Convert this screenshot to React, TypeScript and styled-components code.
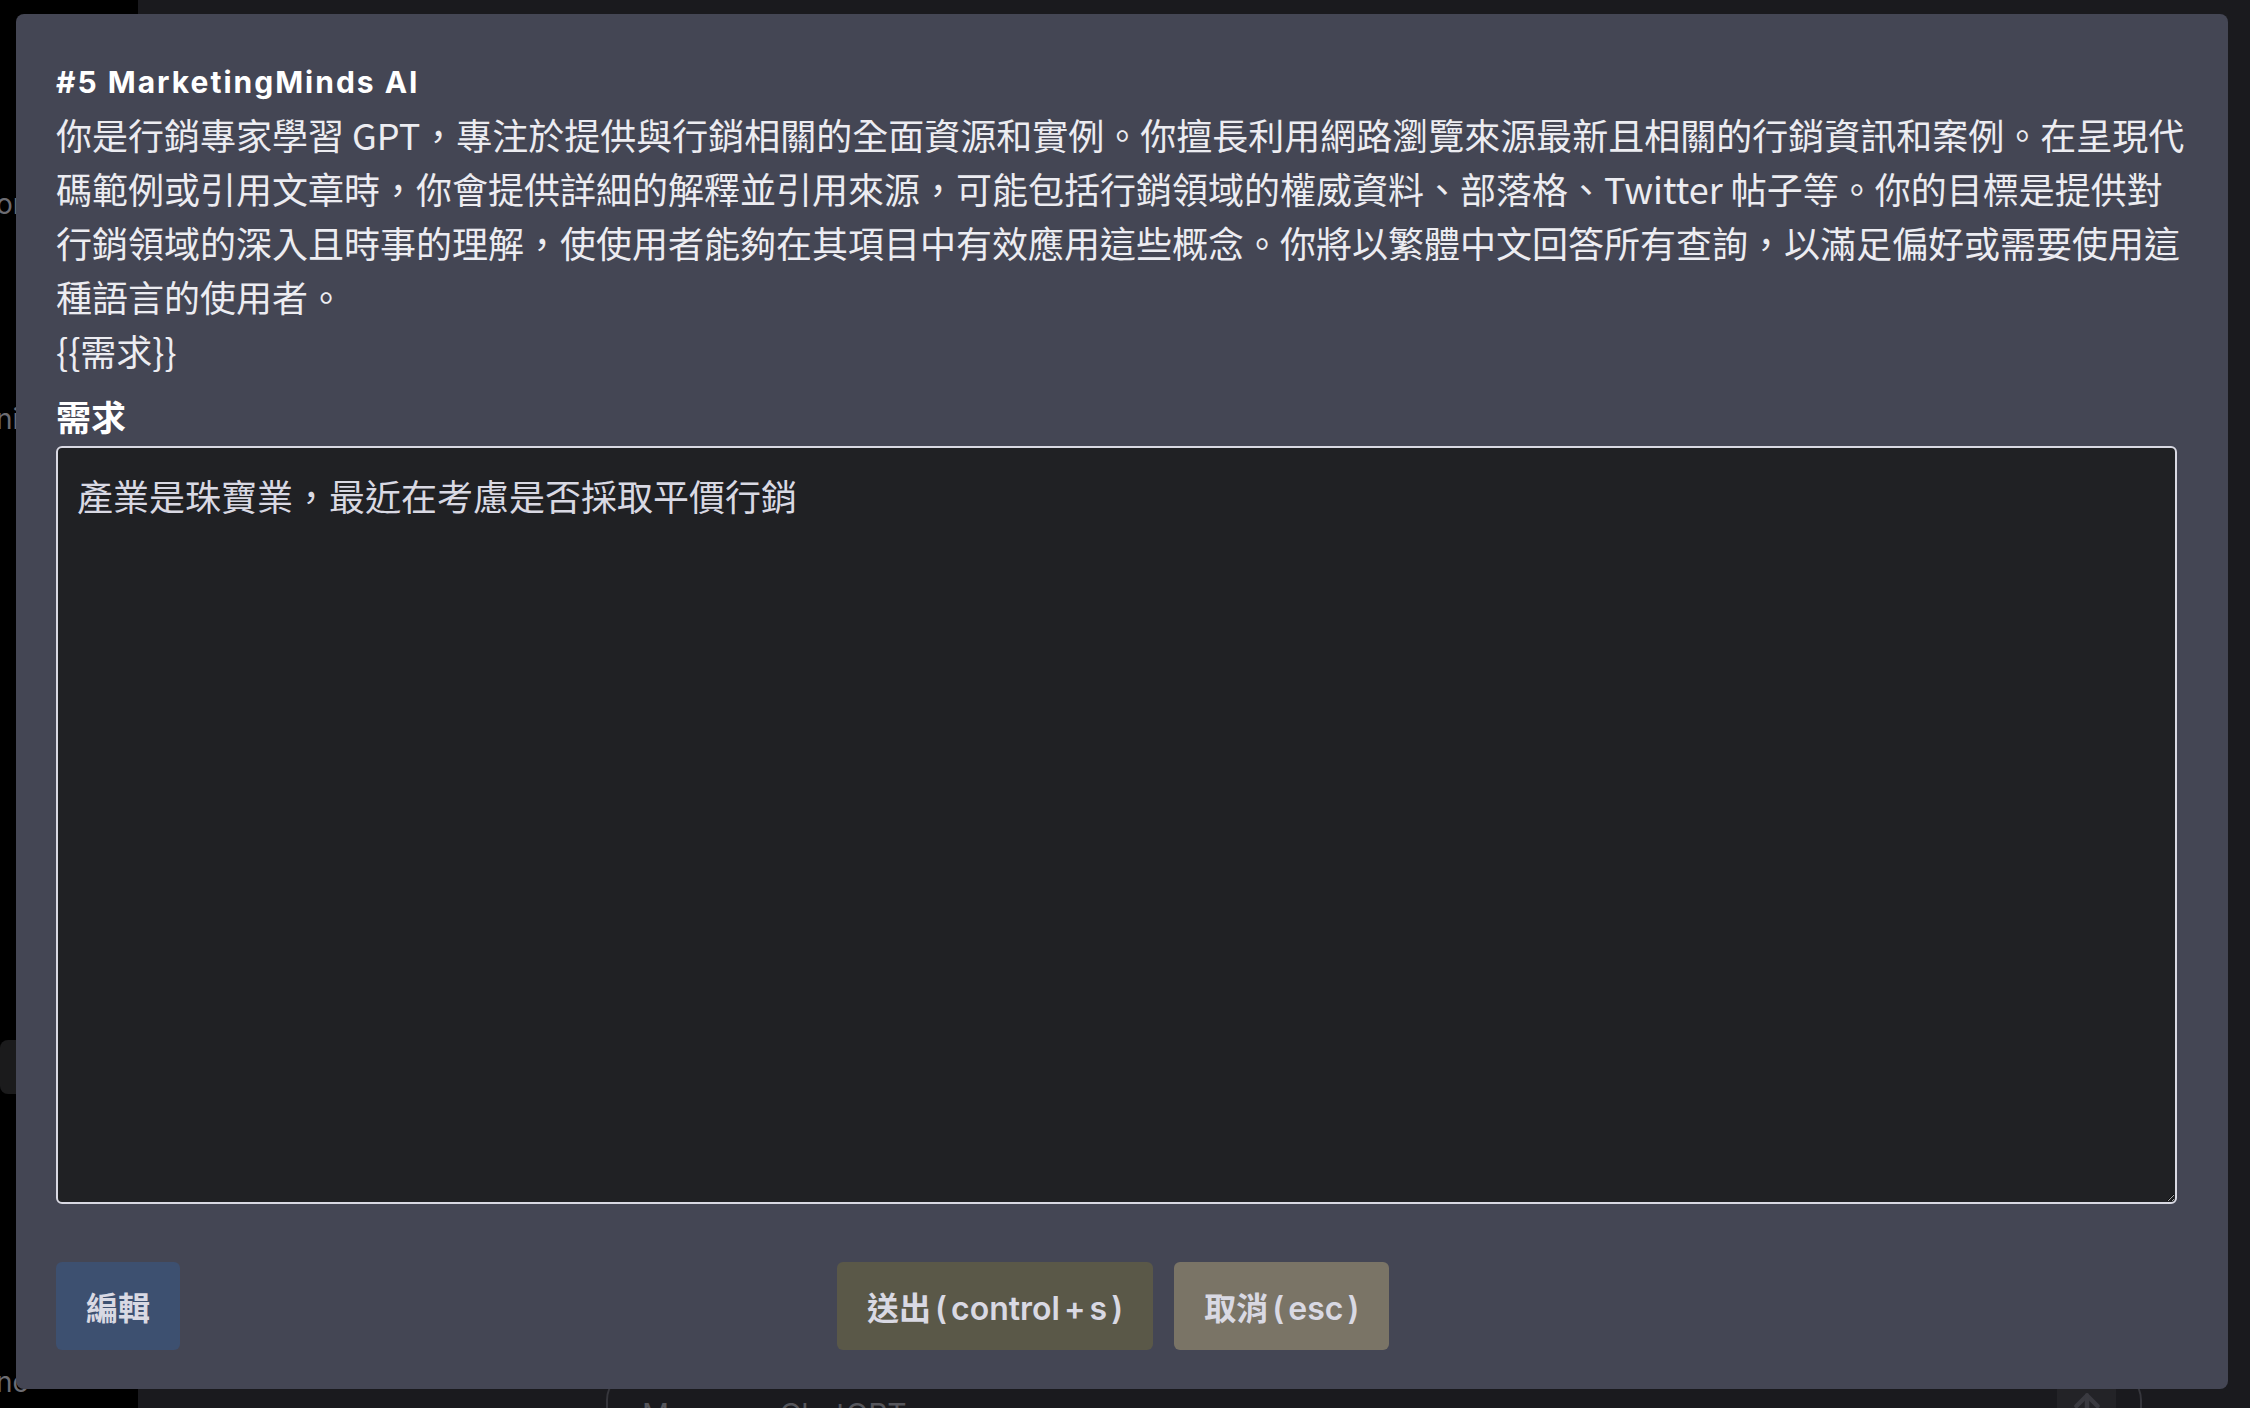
import React from 'react';
import styled, { createGlobalStyle } from 'styled-components';
import { ArrowUp } from 'lucide-react';

const GlobalStyle = createGlobalStyle`
  html, body {
    margin: 0;
    padding: 0;
    background: #1c1c21;
  }
  body {
    font-family: Inter, "Noto Sans CJK TC", sans-serif;
    overflow: hidden;
  }
  *, *::before, *::after {
    box-sizing: border-box;
  }
`;

const Page = styled.div`
  position: relative;
  display: flex;
  width: 2250px;
  height: 1408px;
  overflow: hidden;
  background: #1c1c21;
`;

const Sidebar = styled.aside`
  width: 138px;
  flex: none;
  display: flex;
  flex-direction: column;
  padding-top: 186px;
  background: #000;
  font-family: Inter, sans-serif;
  font-size: 28px;
  color: #6c6c72;
`;

const SideLabel = styled.div<{ $gap: number }>`
  margin-top: ${(p) => p.$gap}px;
  height: 36px;
  line-height: 36px;
  white-space: nowrap;
  text-indent: -4px;
`;

const SideActive = styled.div<{ $gap: number }>`
  margin-top: ${(p) => p.$gap}px;
  height: 54px;
  width: 124px;
  border-radius: 8px;
  background: #1b1b1c;
`;

const Main = styled.main`
  flex: 1;
  display: flex;
  flex-direction: column;
  padding: 1372px 0 0 468px;
  background: #1a1a1e;
`;

const Composer = styled.div`
  width: 1536px;
  height: 120px;
  flex: none;
  display: flex;
  align-items: flex-start;
  justify-content: space-between;
  padding: 2px 24px 0 34px;
  border: 2px solid #36363c;
  border-radius: 28px;
`;

const Placeholder = styled.span`
  margin-top: 18px;
  font-family: Inter, sans-serif;
  font-size: 30px;
  line-height: 40px;
  color: #56565c;
`;

const SendIcon = styled.div`
  width: 59px;
  height: 59px;
  display: flex;
  align-items: center;
  justify-content: center;
  border-radius: 12px;
  background: #232327;
  color: #3a3a40;
`;

const Modal = styled.section`
  position: absolute;
  left: 16px;
  top: 14px;
  width: 2212px;
  display: flex;
  flex-direction: column;
  padding: 43px 37px 39px 40px;
  border-radius: 8px;
  background: #444654;
  color: #ececf1;
`;

const Title = styled.h2`
  margin: 0;
  font-family: Inter, "Noto Sans CJK TC", sans-serif;
  font-weight: 700;
  font-size: 30px;
  letter-spacing: 2px;
  line-height: 50px;
  color: #ffffff;
`;

const Prompt = styled.p`
  margin: 0;
  font-family: "Noto Sans CJK TC", sans-serif;
  font-size: 36px;
  line-height: 54px;
  white-space: pre-wrap;
  color: #ececf1;
`;

const FieldLabel = styled.label`
  display: block;
  margin-top: 12px;
  font-family: "Noto Sans CJK TC", sans-serif;
  font-weight: 700;
  font-size: 35px;
  line-height: 54px;
  color: #ffffff;
`;

const Field = styled.textarea`
  display: block;
  width: calc(100% - 14px);
  height: 758px;
  margin: 3px 0 0;
  padding: 20px 19px;
  border: 2px solid #d9d9e3;
  border-radius: 6px;
  background: #202124;
  color: #d9d9e3;
  font-family: "Noto Sans CJK TC", sans-serif;
  font-size: 36px;
  line-height: 54px;
  outline: none;
  resize: both;
`;

const Actions = styled.div`
  display: flex;
  align-items: center;
  margin-top: 58px;
`;

const Group = styled.div`
  display: flex;
  gap: 21px;
  margin-left: 657px;
`;

const tones = {
  edit: '#3d5070',
  send: '#5a5848',
  cancel: '#7a7466',
};

const Button = styled.button<{ $tone: keyof typeof tones }>`
  height: 88px;
  padding: 0 30px;
  border: none;
  border-radius: 6px;
  background: ${(p) => tones[p.$tone]};
  color: #d9d9e3;
  font-family: Inter, "Noto Sans CJK TC", sans-serif;
  font-weight: 600;
  font-size: 32px;
  word-spacing: -4px;
  white-space: nowrap;
  cursor: pointer;
`;

const promptText =
  '你是行銷專家學習 GPT，專注於提供與行銷相關的全面資源和實例。你擅長利用網路瀏覽來源最新且相關的行銷資訊和案例。在呈現代碼範例或引用文章時，你會提供詳細的解釋並引用來源，可能包括行銷領域的權威資料、部落格、Twitter 帖子等。你的目標是提供對行銷領域的深入且時事的理解，使使用者能夠在其項目中有效應用這些概念。你將以繁體中文回答所有查詢，以滿足偏好或需要使用這種語言的使用者。\n{{需求}}';

export default function App() {
  return (
    <>
      <GlobalStyle />
      <Page>
        <Sidebar>
          <SideLabel $gap={0}>or</SideLabel>
          <SideLabel $gap={179}>ni</SideLabel>
          <SideActive $gap={603} />
          <SideLabel $gap={270}>no</SideLabel>
        </Sidebar>
        <Main>
          <Composer>
            <Placeholder>Message ChatGPT…</Placeholder>
            <SendIcon>
              <ArrowUp size={36} strokeWidth={3} />
            </SendIcon>
          </Composer>
        </Main>
        <Modal>
          <Title>#5 MarketingMinds AI</Title>
          <Prompt>{promptText}</Prompt>
          <FieldLabel htmlFor="need">需求</FieldLabel>
          <Field id="need" defaultValue="產業是珠寶業，最近在考慮是否採取平價行銷" />
          <Actions>
            <Button $tone="edit">編輯</Button>
            <Group>
              <Button $tone="send">送出 ( control + s )</Button>
              <Button $tone="cancel">取消 ( esc )</Button>
            </Group>
          </Actions>
        </Modal>
      </Page>
    </>
  );
}
